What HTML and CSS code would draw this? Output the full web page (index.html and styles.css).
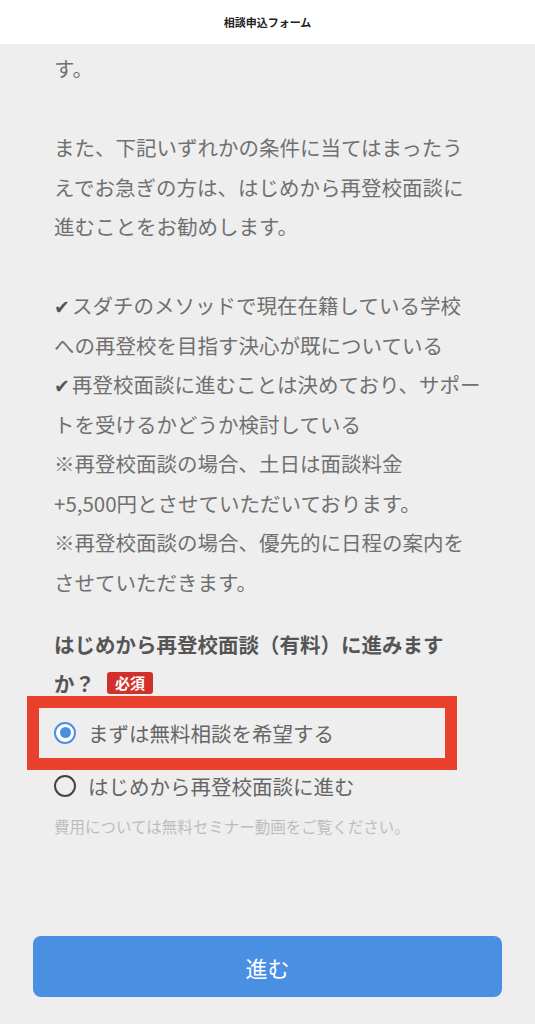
FILE: index.html
```html
<!DOCTYPE html>
<html lang="ja">
<head>
<meta charset="UTF-8" />
<title>相談申込フォーム</title>
<link rel="stylesheet" href="styles.css">
</head>
<body>

<header class="topbar">
    <h1 class="topbar-title">相談申込フォーム</h1>
</header>

<main class="form">
    <p class="lead">
        す。<br /><br />
        また、下記いずれかの条件に当てはまったうえでお急ぎの方は、はじめから再登校面談に進むことをお勧めします。<br /><br />
        <span class="check">✔</span>スダチのメソッドで現在在籍している学校への再登校を目指す決心が既についている<br />
        <span class="check">✔</span>再登校面談に進むことは決めており、サポートを受けるかどうか検討している<br />
        ※再登校面談の場合、土日は面談料金<span class="nowrap">+5,500円</span>とさせていただいております。<br />
        ※再登校面談の場合、優先的に日程の案内をさせていただきます。
    </p>

    <div class="field">
        <div class="field-label">はじめから再登校面談（有料）に進みますか？<span class="badge">必須</span></div>
        <ul class="options">
            <li class="option is-marked"><span class="radio is-checked"></span>まずは無料相談を希望する</li>
            <li class="option"><span class="radio"></span>はじめから再登校面談に進む</li>
        </ul>
        <p class="note">費用については無料セミナー動画をご覧ください。</p>
    </div>
</main>

<footer class="actions">
    <button class="next-btn" type="button">進む</button>
</footer>

</body>
</html>
```

FILE: styles.css
```css
html, body {
    margin: 0; padding: 0;
    background: #EEEEEE;
    font-family: "Noto Sans CJK JP", "Noto Sans", sans-serif;
}
ul, li { list-style-type: none; margin: 0; padding: 0; }

.topbar {
    height: 44px; background: #FFF;
    display: flex; align-items: center; justify-content: center;
}
    .topbar-title { margin: 0; font-size: 11px; font-weight: bold; color: #222; }

.form { padding: 5px 54px 0; }

.lead {
    margin: 0;
    font-size: 20.5px; line-height: 39.5px; color: #707070;
}
    .check {
        display: inline-block; width: 18px; line-height: 1;
        font-family: "DejaVu Sans", sans-serif; color: #555; font-size: 19px;
    }
    .nowrap { white-space: nowrap; }

.field { margin-top: 23px; }
    .field-label {
        font-size: 20.5px; line-height: 39px; font-weight: bold; color: #555;
    }
    .badge {
        display: inline-block; vertical-align: 3px;
        margin-left: 12px; padding: 0 8px;
        height: 22px; line-height: 22px;
        background: #D2302C; color: #FFF; border-radius: 3px;
        font-size: 15px; font-weight: bold;
    }

.options { margin-top: 3px; }
    .option {
        position: relative;
        display: flex; align-items: center; gap: 12px;
        height: 53px;
        font-size: 20.5px; color: #666;
    }
    /* red annotation frame over the first choice */
    .option.is-marked::after {
        content: ""; position: absolute;
        left: -27px; top: -10px; width: 406px; height: 50px;
        border: 12px solid #E8402A;
    }

.radio {
    width: 22px; height: 22px; box-sizing: border-box; flex: none;
    border: 2.5px solid #444; border-radius: 50%;
    display: flex; align-items: center; justify-content: center;
}
    .radio.is-checked { border-color: #4A90E2; background: #FFF; }
    .radio.is-checked::before {
        content: ""; width: 11px; height: 11px; border-radius: 50%; background: #4A90E2;
    }

.note {
    margin: 3px 0 0;
    font-size: 15.5px; line-height: 22px; color: #BDBDBD;
}

.actions { padding: 99px 33px 0; }
    .next-btn {
        display: block; width: 100%; height: 61px;
        border: 0; border-radius: 8px;
        background: #4A90E2; color: #FFF;
        font-family: inherit; font-size: 22px;
    }
```
